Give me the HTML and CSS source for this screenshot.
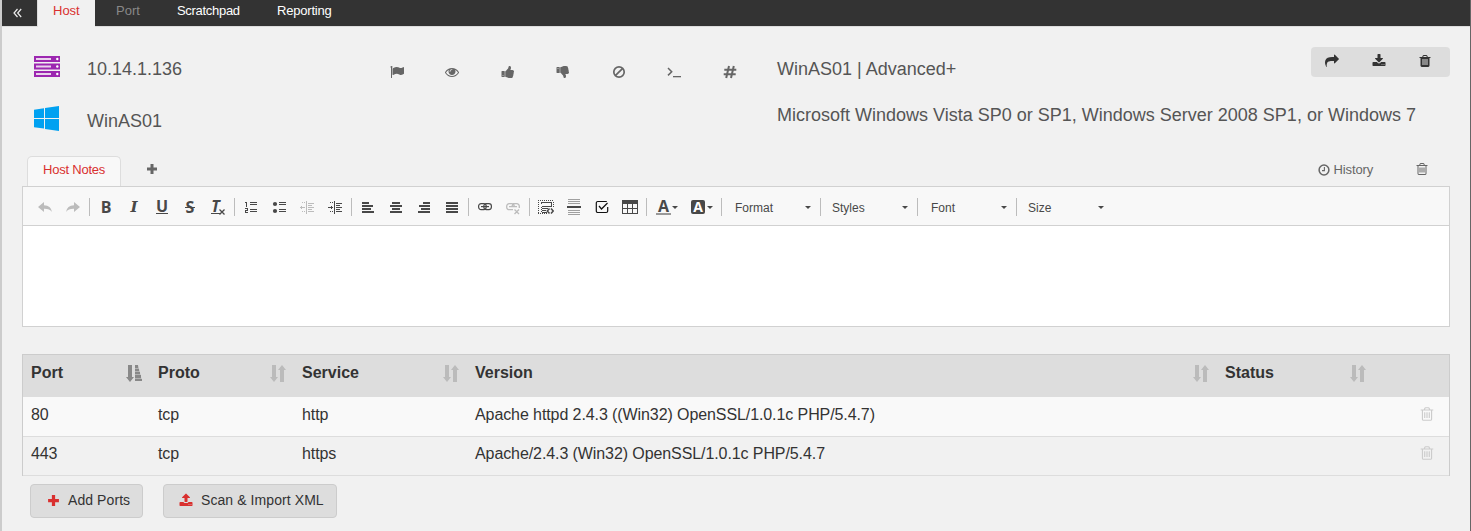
FILE: index.html
```
<!DOCTYPE html>
<html lang="en">
<head>
<meta charset="utf-8">
<title>Host</title>
<link rel="stylesheet" href="styles.css">
</head>
<body>
<svg class="sprite" width="0" height="0">
  <symbol id="flag" viewBox="0 0 1792 1792"><path d="M320 256q0 72-64 110v1266q0 13-9.500 22.500t-22.500 9.500h-64q-13 0-22.500-9.500t-9.500-22.500v-1266q-64-38-64-110 0-53 37.500-90.500t90.500-37.500 90.500 37.500 37.500 90.500zm1472 64v763q0 25-12.500 38.500t-39.500 27.500q-215 116-369 116-61 0-123.500-22t-108.500-48-115.500-48-142.500-22q-192 0-464 146-17 9-33 9-26 0-45-19t-19-45v-742q0-32 31-55 21-14 79-43 236-120 421-120 107 0 200 29t219 88q38 19 88 19 54 0 117.500-21t110-47 88-47 54.500-21q26 0 45 19t19 45z"/></symbol>
  <symbol id="eye" viewBox="0 0 1792 1792"><path d="M1664 960q-152-236-381-353 61 104 61 225 0 185-131.500 316.500t-316.500 131.500-316.500-131.500-131.500-316.500q0-121 61-225-229 117-381 353 133 205 333.500 326.500t434.500 121.500 434.500-121.500 333.500-326.500zm-720-384q0-20-14-34t-34-14q-125 0-214.500 89.500t-89.500 214.500q0 20 14 34t34 14 34-14 14-34q0-86 61-147t147-61q20 0 34-14t14-34zm848 384q0 34-20 69-140 230-376.500 368.500t-499.500 138.500-499.500-139-376.500-368q-20-35-20-69t20-69q140-229 376.500-368t499.500-139 499.500 139 376.500 368q20 35 20 69z"/></symbol>
  <symbol id="thumb" viewBox="0 0 1792 1792"><path d="M320 1344q0-26-19-45t-45-19q-27 0-45.500 19t-18.500 45q0 27 18.500 45.500t45.500 18.500q26 0 45-18.500t19-45.500zm160-512v640q0 26-19 45t-45 19h-288q-26 0-45-19t-19-45v-640q0-26 19-45t45-19h288q26 0 45 19t19 45zm1184 0q0 86-55 149 15 44 15 76 3 76-43 137 17 56 0 117-15 57-54 94 9 112-49 181-64 76-197 78h-129q-66 0-144-15.500t-121.500-29-120.500-39.500q-123-43-158-44-26-1-45-19.500t-19-44.500v-641q0-25 18-43.500t43-20.500q24-2 76-59t101-121q68-87 101-120 18-18 31-48t17.500-48.500 13.500-60.500q7-39 12.500-61t19.500-52 34-50q19-19 45-19 46 0 82.500 10.500t60 26 40 40.500 24 45 12 50 5 45 .5 39q0 38-9.500 76t-19 60-27.500 56q-3 6-10 18t-11 22-8 24h277q78 0 135 57t57 135z"/></symbol>
  <symbol id="ban" viewBox="0 0 14 14"><g fill="none" stroke="currentColor" stroke-width="1.700"><circle cx="7" cy="7" r="5.200"/><path d="M10.700 3.300L3.300 10.700"/></g></symbol>
  <symbol id="terminal" viewBox="0 0 14 14"><path d="M1 3l3.700 3.700L1 10.400" fill="none" stroke="currentColor" stroke-width="1.500"/><path d="M6 11h8v1.300H6z"/></symbol>
  <symbol id="hash" viewBox="0 0 14 14"><path d="M6 1L3.200 13M10.800 1L8 13M1.300 4.800H13.300M.7 9.200H12.700" fill="none" stroke="currentColor" stroke-width="2"/></symbol>
  <symbol id="share" viewBox="0 0 1792 1792"><path d="M1792 640q0 26-19 45l-512 512q-19 19-45 19t-45-19-19-45v-256h-224q-98 0-175.500 6t-154 21.500-133 42.500-105.500 69.500-80 101-48.500 138.500-17.500 181q0 55 5 123 0 6 2.500 23.500t2.500 26.500q0 15-8.500 25t-23.500 10q-16 0-28-17-7-9-13-22t-13.500-30-10.500-24q-127-285-127-451 0-199 53-333 162-403 875-403h224v-256q0-26 19-45t45-19 45 19l512 512q19 19 19 45z"/></symbol>
  <symbol id="download" viewBox="0 0 1792 1792"><path d="M1344 1344q0-26-19-45t-45-19-45 19-19 45 19 45 45 19 45-19 19-45zm256 0q0-26-19-45t-45-19-45 19-19 45 19 45 45 19 45-19 19-45zm128-224v320q0 40-28 68t-68 28h-1472q-40 0-68-28t-28-68v-320q0-40 28-68t68-28h465l135 136q58 56 136 56t136-56l136-136h464q40 0 68 28t28 68zm-325-569q17 41-14 70l-448 448q-18 19-45 19t-45-19l-448-448q-31-29-14-70 17-39 59-39h256v-448q0-26 19-45t45-19h256q26 0 45 19t19 45v448h256q42 0 59 39z"/></symbol>
  <symbol id="upload" viewBox="0 0 1792 1792"><path d="M1344 1472q0-26-19-45t-45-19-45 19-19 45 19 45 45 19 45-19 19-45zm256 0q0-26-19-45t-45-19-45 19-19 45 19 45 45 19 45-19 19-45zm128-224v320q0 40-28 68t-68 28h-1472q-40 0-68-28t-28-68v-320q0-40 28-68t68-28h427q21 56 70.500 92t110.500 36h256q61 0 110.500-36t70.500-92h427q40 0 68 28t28 68zm-325-648q-17 40-59 40h-256v448q0 26-19 45t-45 19h-256q-26 0-45-19t-19-45v-448h-256q-42 0-59-40-17-39 14-69l448-448q18-19 45-19t45 19l448 448q31 30 14 69z"/></symbol>
  <symbol id="trash" viewBox="0 0 1792 1792"><path d="M704 1376v-704q0-14-9-23t-23-9h-64q-14 0-23 9t-9 23v704q0 14 9 23t23 9h64q14 0 23-9t9-23zm256 0v-704q0-14-9-23t-23-9h-64q-14 0-23 9t-9 23v704q0 14 9 23t23 9h64q14 0 23-9t9-23zm256 0v-704q0-14-9-23t-23-9h-64q-14 0-23 9t-9 23v704q0 14 9 23t23 9h64q14 0 23-9t9-23zm-544-992h448l-48-117q-7-9-17-11h-317q-10 2-17 11zm928 32v64q0 14-9 23t-23 9h-96v948q0 83-47 143.500t-113 60.500h-832q-66 0-113-58.500t-47-141.500v-952h-96q-14 0-23-9t-9-23v-64q0-14 9-23t23-9h309l70-167q15-37 54-63t79-26h320q40 0 79 26t54 63l70 167h309q14 0 23 9t9 23z"/></symbol>
  <symbol id="trash-o" viewBox="0 0 1792 1792"><path d="M704 736v576q0 14-9 23t-23 9h-64q-14 0-23-9t-9-23v-576q0-14 9-23t23-9h64q14 0 23 9t9 23zm256 0v576q0 14-9 23t-23 9h-64q-14 0-23-9t-9-23v-576q0-14 9-23t23-9h64q14 0 23 9t9 23zm256 0v576q0 14-9 23t-23 9h-64q-14 0-23-9t-9-23v-576q0-14 9-23t23-9h64q14 0 23 9t9 23zm128 724v-948h-896v948q0 22 7 40.500t14.500 27 10.500 8.500h832q3 0 10.500-8.500t14.500-27 7-40.500zm-672-1076h448l-48-117q-7-9-17-11h-317q-10 2-17 11zm928 32v64q0 14-9 23t-23 9h-96v948q0 83-47 143.500t-113 60.500h-832q-66 0-113-58.500t-47-141.500v-952h-96q-14 0-23-9t-9-23v-64q0-14 9-23t23-9h309l70-167q15-37 54-63t79-26h320q40 0 79 26t54 63l70 167h309q14 0 23 9t9 23z"/></symbol>
  <symbol id="plus" viewBox="0 0 12 12"><path d="M4.500 1h3v3.500H11v3H7.500V11h-3V7.500H1v-3h3.500z"/></symbol>
  <symbol id="sort" viewBox="0 0 16 17"><path d="M2 0h4v12h2l-4 5-4-5h2zM10 17V5H8l4-5 4 5h-2v12z"/></symbol>
  <symbol id="caret" viewBox="0 0 6 3"><path d="M0 0h6L3 3z"/></symbol>
  <symbol id="undo" viewBox="0 0 16 16"><path d="M7 3v3.200q7 .3 8 6.800-2.500-3.400-8-3.200V13L1 8z"/></symbol>
</svg>
<div class="page">
  <nav class="tabs">
    <span class="collapse"><svg width="9" height="10" viewBox="0 0 9 10"><path class="chevrons" d="M4.500 1L1 5l3.500 4M8.200 1L4.700 5l3.500 4"/></svg></span>
    <a class="tab active">Host</a><a class="tab disabled">Port</a><a class="tab scratch">Scratchpad</a><a class="tab reporting">Reporting</a>
  </nav>
  <header class="host">
    <div class="identity">
      <div class="id-row"><svg class="server" width="26" height="21" viewBox="0 0 26 21"><path fill="#9c27b0" d="M0 0h26v6H0zM0 7.500h26v6H0zM0 15h26v6H0z"/><path fill="#ead3ed" d="M2 2h15v2H2zM2 9.500h15v2H2zM2 17h15v2H2z"/><g fill="#fff"><circle cx="23.300" cy="3" r="1.200"/><circle cx="23.300" cy="10.500" r="1.200"/><circle cx="23.300" cy="18" r="1.200"/></g></svg><span>10.14.1.136</span></div>
      <div class="id-row"><svg class="windows" width="25" height="25" viewBox="0 0 25 25"><path fill="#00a1f1" d="M0 3.800L10 2.200v9.700H0zM11 2.100L25 0v11.900H11zM0 12.900h10v9.700L0 21.200zM11 12.900h14V25l-14-2z"/></svg><span>WinAS01</span></div>
    </div>
    <div class="flags">
      <i><svg class="fa"><use href="#flag"/></svg></i><i><svg class="fa"><use href="#eye"/></svg></i><i><svg class="fa"><use href="#thumb"/></svg></i><i><svg class="fa flip"><use href="#thumb"/></svg></i><i><svg class="fa"><use href="#ban"/></svg></i><i><svg class="fa"><use href="#terminal"/></svg></i><i><svg class="fa"><use href="#hash"/></svg></i>
    </div>
    <div class="details">
      <div class="detail-top"><span>WinAS01 | Advanced+</span>
        <div class="actions"><svg class="act"><use href="#share"/></svg><svg class="act"><use href="#download"/></svg><svg class="act"><use href="#trash"/></svg></div>
      </div>
      <div class="os">Microsoft Windows Vista SP0 or SP1, Windows Server 2008 SP1, or Windows 7</div>
    </div>
  </header>
  <div class="note-tabs">
    <span class="note-tab">Host Notes</span>
    <svg class="add-note" width="12" height="12"><use href="#plus"/></svg>
    <span class="history"><svg class="clock" width="12" height="12" viewBox="0 0 12 12"><circle cx="6" cy="6" r="4.900" stroke-width="1.500"/><path d="M6.400 3v3.600H4" stroke-width="1.100"/></svg>History</span>
    <svg class="clear-note"><use href="#trash-o"/></svg>
  </div>
  <section class="editor">
    <div class="toolbar">
      <span class="btn off"><svg class="ic"><use href="#undo"/></svg></span>
      <span class="btn off"><svg class="ic mirror"><use href="#undo"/></svg></span>
      <b class="sep"></b>
      <span class="btn glyph">B</span><span class="btn glyph italic">I</span><span class="btn glyph"><span class="under">U</span></span><span class="btn glyph"><span class="strike">S</span></span><span class="btn glyph"><span class="clear">T</span><svg class="cross" width="6" height="6" viewBox="0 0 6 6"><path d="M.5.5l5 5M5.500.5l-5 5" stroke="currentColor" stroke-width="1.300"/></svg></span>
      <b class="sep"></b>
      <span class="btn"><svg class="ic" viewBox="0 0 16 16" shape-rendering="crispEdges"><path d="M2 3h2v5H3V4H2zM2 9h3v3H3v1h2v1H2v-3h2v-1H2zM7 3h7v1H7zM7 5h7v1H7zM7 10h7v1H7zM7 12h7v1H7z"/></svg></span>
      <span class="btn"><svg class="ic" viewBox="0 0 16 16"><circle cx="4" cy="5" r="2.100"/><circle cx="4" cy="12" r="2.100"/><path d="M8 3h7v1H8zM8 5h7v1H8zM8 10h7v1H8zM8 12h7v1H8z"/></svg></span>
      <span class="btn off"><svg class="ic" viewBox="0 0 16 16" shape-rendering="crispEdges"><path d="M7 2h1v13H7zM1 8h5v1H1zM2 7h1v3H2zM3 3h1v1H3zM5 3h1v1H5zM3 12h1v1H3zM5 12h1v1H5zM9 4h6v1H9zM9 6h4v1H9zM9 8h6v1H9zM9 10h4v1H9zM9 12h6v1H9z"/></svg></span>
      <span class="btn"><svg class="ic" viewBox="0 0 16 16" shape-rendering="crispEdges"><path d="M7 2h1v13H7zM1 8h5v1H1zM4 7h1v3H4zM3 3h1v1H3zM5 3h1v1H5zM3 12h1v1H3zM5 12h1v1H5zM9 4h6v1H9zM9 6h4v1H9zM9 8h6v1H9zM9 10h4v1H9zM9 12h6v1H9z"/></svg></span>
      <b class="sep"></b>
      <span class="btn"><svg class="ic" viewBox="0 0 16 16"><path d="M2 3h7v2H2zM2 6h11v2H2zM2 9h9v2H2zM2 12h12v2H2z"/></svg></span>
      <span class="btn"><svg class="ic" viewBox="0 0 16 16"><path d="M4 3h8v2H4zM2 6h12v2H2zM4 9h8v2H4zM2 12h12v2H2z"/></svg></span>
      <span class="btn"><svg class="ic" viewBox="0 0 16 16"><path d="M7 3h7v2H7zM3 6h11v2H3zM5 9h9v2H5zM2 12h12v2H2z"/></svg></span>
      <span class="btn"><svg class="ic" viewBox="0 0 16 16"><path d="M2 3h12v2H2zM2 6h12v2H2zM2 9h12v2H2zM2 12h12v2H2z"/></svg></span>
      <b class="sep"></b>
      <span class="btn"><svg class="ic" viewBox="0 0 16 16"><g fill="none" stroke="currentColor" stroke-width="1.200"><rect x="1.600" y="4.600" width="7.600" height="6" rx="2.500"/><rect x="6.800" y="4.600" width="7.600" height="6" rx="2.500"/><path d="M4 7.600h8"/></g></svg></span>
      <span class="btn off"><svg class="ic" viewBox="0 0 16 16"><g fill="none" stroke="currentColor" stroke-width="1.300"><path d="M8 10.700H4.200a2.500 2.500 0 0 1-2.500-2.500V7.200a2.500 2.500 0 0 1 2.500-2.500h2.500a2.500 2.500 0 0 1 2.500 2.500M7 8a2.500 3.300 0 0 1 2.500-3.300h2.300a2.500 2.500 0 0 1 2.500 2.500V9M4 7.700h8M9.500 10.500l4.500 4.500M14 10.500l-4.500 4.500"/></g></svg></span>
      <b class="sep"></b>
      <span class="btn"><svg class="ic" viewBox="0 0 16 16"><path d="M0 1.500h16M0 14.500h9M.5 3v11M15.500 3v6" fill="none" stroke="currentColor" stroke-dasharray="1 1"/><path fill-rule="evenodd" d="M3 3h11v5H3zM4 4v3h9V4zM3 9h7v1H3zM3 11h5v1H3zM3 13h6v1H3zM3 5h1v9H3z"/><path d="M11.500 9.500L9.300 12l2.200 2.500M13 9.500l2.200 2.500L13 14.500" fill="none" stroke="currentColor" stroke-width="1.500"/></svg></span>
      <span class="btn"><svg class="ic" viewBox="0 0 16 16"><path d="M2 0h12v1H2zM2 2h12v1H2zM2 4h12v1H2zM2 11h12v1H2zM2 13h12v1H2zM2 15h12v1H2z" opacity=".5"/><path d="M1 7h14v2H1z"/></svg></span>
      <span class="btn black"><svg class="ic" viewBox="0 0 16 16"><g fill="none" stroke="currentColor"><path d="M13.700 8v4a1.500 1.500 0 0 1-1.500 1.500H3.800A1.500 1.500 0 0 1 2.300 12V4a1.500 1.500 0 0 1 1.500-1.500h9" stroke-width="1.200"/><path d="M5 7l2.500 3L13.500 4" stroke-width="1.200"/></g></svg></span>
      <span class="btn"><svg class="ic" viewBox="0 0 16 16"><path fill-rule="evenodd" d="M0 1h16v14H0zM1 5v4h4V5zM6 5v4h4V5zM11 5v4h4V5zM1 10v4h4v-4zM6 10v4h4v-4zM11 10v4h4v-4z"/></svg></span>
      <b class="sep"></b>
      <span class="color-btn"><span class="fore">A</span><svg class="caret"><use href="#caret"/></svg></span>
      <span class="color-btn"><span class="back">A</span><svg class="caret"><use href="#caret"/></svg></span>
      <b class="sep"></b>
      <span class="combo wide">Format<svg class="caret"><use href="#caret"/></svg></span><b class="sep"></b>
      <span class="combo">Styles<svg class="caret"><use href="#caret"/></svg></span><b class="sep"></b>
      <span class="combo wide">Font<svg class="caret"><use href="#caret"/></svg></span><b class="sep"></b>
      <span class="combo">Size<svg class="caret"><use href="#caret"/></svg></span>
    </div>
    <div class="text-area"></div>
  </section>
  <table class="ports">
    <colgroup><col class="c-port"><col class="c-proto"><col class="c-service"><col class="c-version"><col class="c-status"><col></colgroup>
    <thead><tr>
      <th><div>Port<svg class="sort sorted" viewBox="0 0 16 17"><path d="M2 0h4v12h2l-4 5-4-5h2zM9 0h3v3H9zM9 4h4v2H9zM9 7h5v2H9zM9 10h6v3H9zM9 14h7v2H9z"/><path d="M9 0h3l4 16H9z" opacity=".5"/></svg></div></th>
      <th><div>Proto<svg class="sort"><use href="#sort"/></svg></div></th>
      <th><div>Service<svg class="sort"><use href="#sort"/></svg></div></th>
      <th><div>Version<svg class="sort"><use href="#sort"/></svg></div></th>
      <th><div>Status<svg class="sort"><use href="#sort"/></svg></div></th>
      <th></th>
    </tr></thead>
    <tbody>
      <tr class="odd"><td>80</td><td>tcp</td><td>http</td><td>Apache httpd 2.4.3 ((Win32) OpenSSL/1.0.1c PHP/5.4.7)</td><td></td><td class="remove"><svg><use href="#trash-o"/></svg></td></tr>
      <tr><td>443</td><td>tcp</td><td>https</td><td>Apache/2.4.3 (Win32) OpenSSL/1.0.1c PHP/5.4.7</td><td></td><td class="remove"><svg><use href="#trash-o"/></svg></td></tr>
    </tbody>
  </table>
  <div class="buttons">
    <span class="button add"><svg width="13" height="13"><use href="#plus"/></svg>Add Ports</span>
    <span class="button scan"><svg width="14" height="14"><use href="#upload"/></svg>Scan &amp; Import XML</span>
  </div>
</div>
</body>
</html>
```
FILE: styles.css
```
* { box-sizing: border-box; }
body { margin: 0; background: #f1f1f1; font-family: "Liberation Sans", Arial, sans-serif; color: #333; }
svg { fill: currentColor; flex: none; display: block; }
.sprite { display: none; }
.page { height: 531px; overflow: hidden; border-left: 2px solid #ccc; border-right: 1px solid #666; }

.tabs { display: flex; height: 26px; background: #333; font-size: 13px; color: #fff; box-shadow: 0 1px 0 #ddd; }
.collapse { width: 35px; padding: 8px 0 0 11px; color: #eee; }
.chevrons { fill: none; stroke: currentColor; stroke-width: 1.2; }
.tab { height: 26px; padding: 0 15px; line-height: 21px; }
.tab.active { height: 27px; width: 58px; background: #f1f1f1; color: #d9302f; border-left: 1px solid #ddd; }
.tab.disabled { width: 63px; padding: 0 0 0 21px; color: #888; }
.tab.scratch { width: 100px; padding: 0 0 0 19px; letter-spacing: -0.3px; }
.tab.reporting { padding-left: 19px; letter-spacing: -0.2px; }

.host { display: flex; height: 130px; font-size: 18px; line-height: 20px; color: #555; }
.identity { width: 367px; padding: 16px 0 0 32px; }
.id-row { display: flex; align-items: center; height: 52px; }
.id-row span { padding-top: 2px; }
.server { margin-right: 27px; margin-bottom: 3px; }
.windows { margin-right: 28px; margin-bottom: 3px; }
.flags { display: flex; width: 408px; padding-top: 39px; color: #666; }
.flags i { width: 55.5px; display: flex; justify-content: center; }
.fa { width: 14px; height: 14px; }
.flip { transform: scaleY(-1); }
.details { flex: 1; padding-top: 21px; }
.detail-top { display: flex; justify-content: space-between; height: 58px; padding-right: 20px; line-height: 44px; }
.actions { display: flex; align-items: center; width: 139px; height: 30px; padding-left: 14px; gap: 32.5px; border-radius: 4px; background: #ddd; color: #333; }
.act { width: 14px; height: 14px; margin-bottom: 3px; }

.note-tabs { display: flex; height: 30px; padding: 0 22px 0 25px; font-size: 13px; color: #666; }
.note-tab { width: 94px; padding-left: 15px; line-height: 26px; letter-spacing: -0.22px; border: 1px solid #ddd; border-bottom: 0; border-radius: 5px 5px 0 0; background: #f8f8f8; color: #d9302f; }
.add-note { margin: 7px 0 0 25px; }
.history { display: flex; align-items: center; height: 27px; gap: 4px; margin-left: auto; letter-spacing: -0.15px; }
.clock { fill: none; stroke: currentColor; }
.clear-note { width: 14px; height: 14px; margin: 6px 19px 0 42px; }

.editor { height: 141px; margin: 0 20px; border: 1px solid #d1d1d1; background: #fff; }
.toolbar { display: flex; align-items: center; height: 39px; padding: 0 0 0 8px; border-bottom: 1px solid #d1d1d1; background: #f8f8f8; color: #484848; font-size: 12px; }
.btn { display: flex; justify-content: center; align-items: center; width: 28px; height: 28px; margin-top: 2px; }
.ic { width: 16px; height: 16px; }
.off { color: #bcbcbc; }
.black { color: #111; }
.mirror { transform: scaleX(-1); }
.sep { width: 1px; height: 18px; margin: 2px 2px 0; background: #bcbcbc; }
.glyph { font: bold 16px/16px "Open Sans", sans-serif; }
.italic { font-family: "DejaVu Serif", serif; font-size: 15px; font-style: italic; }
.under { height: 14px; line-height: 13px; border-bottom: 1px solid; }
.strike { text-decoration: line-through 1px; background: linear-gradient(currentColor, currentColor) center 8px / 100% 1px no-repeat; padding: 0 1px; }
.clear { height: 14px; line-height: 13px; border-bottom: 1px solid; font-style: italic; }
.cross { margin: 10px 0 0 -1px; }
.color-btn { display: flex; align-items: center; width: 35px; height: 28px; padding-left: 7px; margin-top: 2px; font: bold 16px/13px "Open Sans", sans-serif; }
.fore { width: 15px; height: 16px; line-height: 14px; border-bottom: 2px solid #999; text-align: center; }
.back { width: 14px; height: 14px; border-radius: 2px; background: #484848; color: #fff; text-align: center; font-size: 14px; }
.caret { width: 6px; height: 3px; margin-left: 2px; }
.fore + .caret { margin-left: 1px; }
.combo { display: flex; align-items: center; justify-content: space-between; width: 92px; height: 28px; padding: 0 7px 0 9px; margin-top: 3px; }
.combo.wide { width: 94px; padding-left: 11px; }
.combo .caret { margin-top: -1px; }

.ports { width: 1428px; margin: 27px 0 0 20px; table-layout: fixed; border-collapse: separate; border-spacing: 0; border: 1px solid #ccc; border-bottom: 0; font-size: 16px; line-height: 20px; }
.c-port { width: 127px; } .c-proto { width: 144px; } .c-service { width: 173px; } .c-version { width: 750px; } .c-status { width: 157px; }
th { height: 42px; padding: 8px 8px 0; background: #ddd; text-align: left; vertical-align: top; }
th div { display: flex; justify-content: space-between; }
.sort { width: 16px; height: 17px; margin-top: 2px; color: #bbb; }
.sorted { color: #888; }
td { height: 39px; padding: 8px 8px 0; border-bottom: 1px solid #ddd; vertical-align: top; letter-spacing: -0.09px; }
.odd { background: #f9f9f9; }
.odd td { height: 40px; }
.odd + tr td { padding-top: 7px; }
.remove svg { width: 16px; height: 16px; margin: 1px 0 0 36.5px; color: #ccc; }

.buttons { display: flex; gap: 20px; padding: 8px 0 0 28px; }
.button { display: flex; align-items: center; height: 34px; padding-bottom: 2px; border: 1px solid #ccc; border-radius: 4px; background: #ddd; font-size: 14px; letter-spacing: 0.08px; }
.button svg { color: #d9302f; }
.add { width: 113px; padding-left: 16px; gap: 8px; }
.scan { width: 174px; padding-left: 15px; gap: 8px; }
```
